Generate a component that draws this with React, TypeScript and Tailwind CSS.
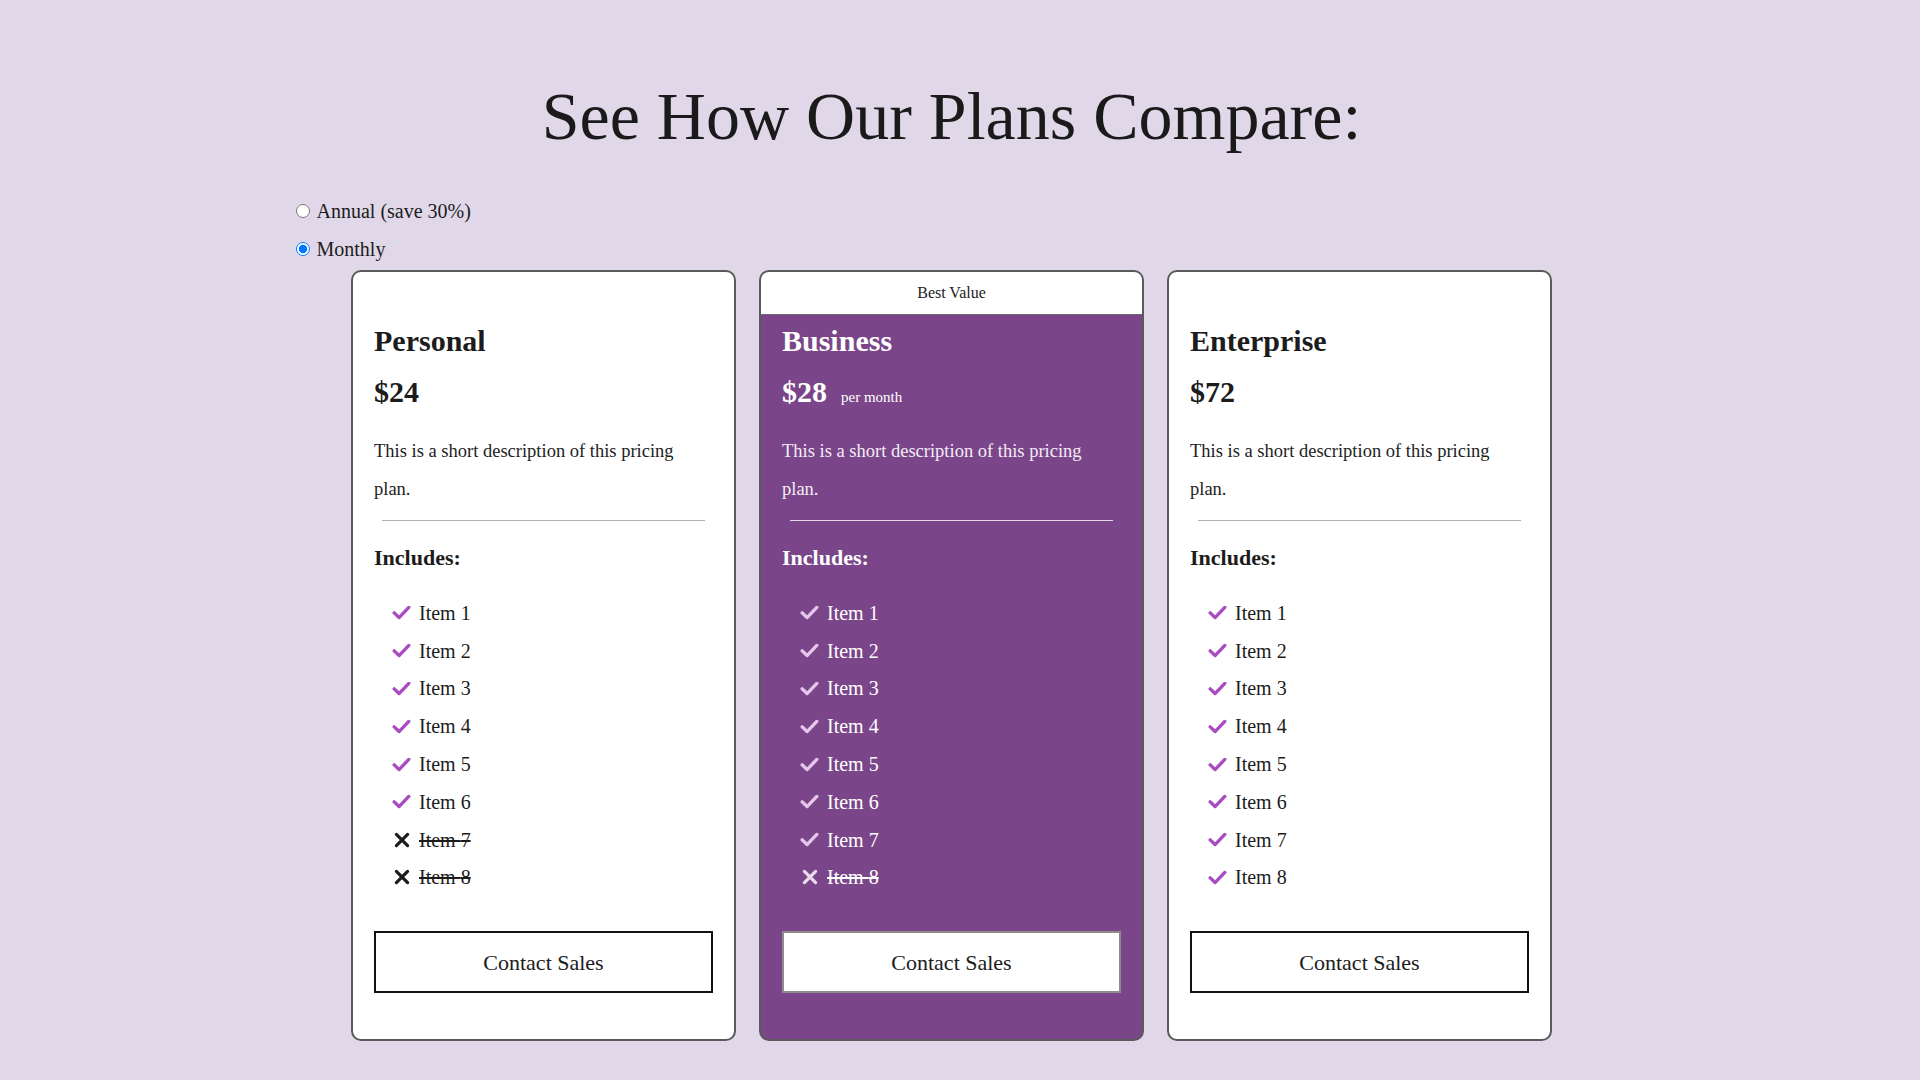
import React, { useState } from 'react';
import clsx from 'clsx';

const PLANS = [
    { name: 'Personal', price: 24, included: 6, featured: false },
    { name: 'Business', price: 28, included: 7, featured: true },
    { name: 'Enterprise', price: 72, included: 8, featured: false },
];

const CheckIcon = ({ className }: { className?: string }) => (
    <svg viewBox="0 0 20 16" width="19" height="15" className={className} fill="none">
        <polyline
            points="2.2,8.4 7.4,13.4 17.8,2.6"
            stroke="currentColor"
            strokeWidth="3.6"
            strokeLinecap="round"
            strokeLinejoin="round"
        />
    </svg>
);

const XIcon = ({ className }: { className?: string }) => (
    <svg viewBox="0 0 16 16" width="16" height="16" className={className} fill="none">
        <path d="M2.4 2.4 13.6 13.6 M13.6 2.4 2.4 13.6" stroke="currentColor" strokeWidth="3.2" strokeLinecap="round" />
    </svg>
);

interface PlanCardProps {
    name: string;
    price: number;
    included: number;
    featured: boolean;
}

const PlanCard: React.FC<PlanCardProps> = ({ name, price, included, featured }) => {
    const items = Array.from({ length: 8 }, (_, i) => i + 1);

    return (
        <div
            className={clsx(
                'relative w-[385px] rounded-[10px] border-2 border-[#5a5a5a] px-[21px] pt-[51px] pb-[46px]',
                featured ? 'bg-[#7a4689] text-white' : 'bg-white text-[#1c1c1c]'
            )}
        >
            {featured && (
                <div className="absolute inset-x-0 top-0 flex h-[43px] items-center justify-center rounded-t-[8px] border-b border-[#6b6b6b] bg-white text-[16px] text-[#222]">
                    Best Value
                </div>
            )}

            <h2 className="text-[30px] font-bold leading-[36px]">{name}</h2>

            <div className="mt-[15px] flex h-[36px] items-baseline overflow-hidden leading-[36px]">
                <span className="text-[30px] font-bold">${price}</span>
                {featured && <span className="ml-[14px] text-[15px] leading-[20px]">per month</span>}
            </div>

            <p className={clsx('mt-[22px] max-w-[325px] text-[18.5px] leading-[38px]', featured ? 'text-[#f4ecf6]' : 'text-[#222]')}>
                This is a short description of this pricing plan.
            </p>

            <div className={clsx('mx-[8px] mt-[12px] border-t', featured ? 'border-[#e4d8ea]' : 'border-[#b0b0b0]')} />

            <h3 className="mt-[23px] text-[22px] font-bold leading-[28px]">Includes:</h3>

            <ul className="mt-[22px] pl-[18px]">
                {items.map((n) => {
                    const ok = n <= included;
                    return (
                        <li key={n} className="flex h-[37.8px] items-center gap-[8px] text-[20px]">
                            <span className="flex w-[19px] justify-center">
                                {ok ? (
                                    <CheckIcon className={featured ? 'text-[#e6c6ec]' : 'text-[#a94bc1]'} />
                                ) : (
                                    <XIcon className={featured ? 'text-[#ecdcef]' : 'text-[#1c1c1c]'} />
                                )}
                            </span>
                            <span className={clsx(!ok && 'line-through')}>Item {n}</span>
                        </li>
                    );
                })}
            </ul>

            <button
                className={clsx(
                    'mt-[35px] h-[62px] w-full border-2 bg-white text-[22px] text-[#1c1c1c]',
                    featured ? 'border-[#8c8c8c]' : 'border-[#111]'
                )}
            >
                Contact Sales
            </button>
        </div>
    );
};

export default function App() {
    const [billing, setBilling] = useState<'annual' | 'monthly'>('monthly');

    return (
        <div className="min-h-screen bg-[#e0d8e9] pr-[17px] pb-[40px] font-['Liberation_Serif',serif] text-[#1c1c1c]">
            <div className="mx-auto w-[1320px]">
                <h1 className="pt-[78px] text-center text-[68px] font-normal leading-[76px] text-[#1a1a1a]">
                    See How Our Plans Compare:
                </h1>

                <div className="mt-[38px]">
                    <label className="flex h-[38px] items-center text-[20px]">
                        <input
                            type="radio"
                            name="billing"
                            className="m-0 ml-[4px] mr-[7px] h-[14px] w-[14px]"
                            checked={billing === 'annual'}
                            onChange={() => setBilling('annual')}
                        />
                        Annual (save 30%)
                    </label>
                    <label className="flex h-[38px] items-center text-[20px]">
                        <input
                            type="radio"
                            name="billing"
                            className="m-0 ml-[4px] mr-[7px] h-[14px] w-[14px]"
                            checked={billing === 'monthly'}
                            onChange={() => setBilling('monthly')}
                        />
                        Monthly
                    </label>
                </div>

                <div className="mt-[2px] flex justify-center gap-[23px]">
                    {PLANS.map((p) => (
                        <PlanCard key={p.name} {...p} />
                    ))}
                </div>
            </div>
        </div>
    );
}
